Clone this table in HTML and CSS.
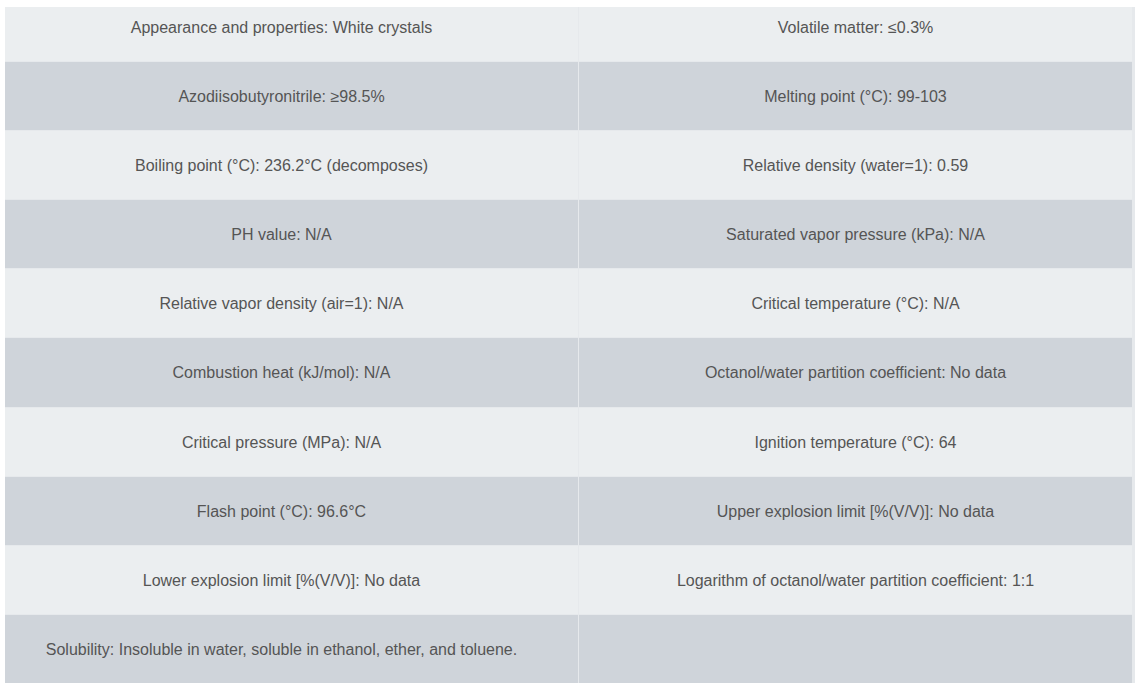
FILE: index.html
```html
<!DOCTYPE html>
<html lang="en">
<head>
<meta charset="utf-8">
<title>Properties</title>
<link rel="stylesheet" href="styles.css">
</head>
<body>
<div class="table">
  <div class="cell left light first">Appearance and properties: White crystals</div>
  <div class="cell right light first">Volatile matter: ≤0.3%</div>
  <div class="cell left dark">Azodiisobutyronitrile: ≥98.5%</div>
  <div class="cell right dark">Melting point (°C): 99-103</div>
  <div class="cell left light">Boiling point (°C): 236.2°C (decomposes)</div>
  <div class="cell right light">Relative density (water=1): 0.59</div>
  <div class="cell left dark">PH value: N/A</div>
  <div class="cell right dark">Saturated vapor pressure (kPa): N/A</div>
  <div class="cell left light">Relative vapor density (air=1): N/A</div>
  <div class="cell right light">Critical temperature (°C): N/A</div>
  <div class="cell left dark">Combustion heat (kJ/mol): N/A</div>
  <div class="cell right dark">Octanol/water partition coefficient: No data</div>
  <div class="cell left light">Critical pressure (MPa): N/A</div>
  <div class="cell right light">Ignition temperature (°C): 64</div>
  <div class="cell left dark">Flash point (°C): 96.6°C</div>
  <div class="cell right dark">Upper explosion limit [%(V/V)]: No data</div>
  <div class="cell left light">Lower explosion limit [%(V/V)]: No data</div>
  <div class="cell right light">Logarithm of octanol/water partition coefficient: 1:1</div>
  <div class="cell left dark">Solubility: Insoluble in water, soluble in ethanol, ether, and toluene.</div>
  <div class="cell right dark"></div>
</div>
</body>
</html>
```
FILE: styles.css
```css
html, body {
  margin: 0;
  padding: 0;
  background: #ffffff;
}

body {
  font-family: "Liberation Sans", Arial, sans-serif;
  font-size: 16px;
  color: #555555;
  overflow: hidden;
}

.table {
  margin: 7px 0 0 5px;
  width: 1127px;
  padding-right: 3px;
  display: grid;
  grid-template-columns: 573px 553px;
  grid-template-rows: 54px repeat(9, 68.12px);
  column-gap: 1px;
  row-gap: 1px;
  background: #e6e9ec;
}

.cell {
  display: flex;
  align-items: center;
  justify-content: center;
  text-align: center;
  line-height: 20px;
  padding-top: 2px;
}

.cell.left {
  padding-right: 20px;
}

.cell.first {
  padding-top: 0;
  padding-bottom: 12px;
}

.light {
  background: #ebeef0;
}

.dark {
  background: #cfd4da;
}
```
